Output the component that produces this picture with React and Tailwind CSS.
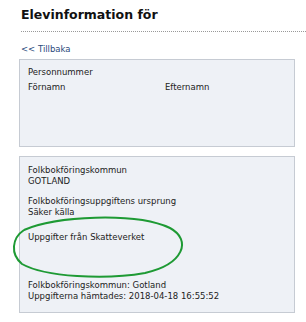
export default function App() {
  const f = { fontFamily: '"DejaVu Sans", Verdana, sans-serif' };
  return (
    <div className="relative w-[306px] h-[322px] bg-white text-[#222]" style={f}>
      <div className="pl-[21px] pt-[7px]">
        <h1 className="text-[12.5px] font-bold leading-[16px] text-[#111]">Elevinformation för</h1>
      </div>
      <div className="ml-[21px] mt-[8px] border-t border-dotted border-[#999]" />
      <div className="pl-[21px] pt-[12px] text-[8.5px] leading-[11px] text-[#2b4a7c]">&lt;&lt; Tillbaka</div>
      <div className="ml-[19px] mr-[11px] mt-[4px] h-[88px] border border-[#c6cbd3] bg-[#eef1f6] px-[8px] pt-[7px] text-[8.5px] leading-[11px]">
        <div>Personnummer</div>
        <div className="mt-[4px] grid grid-cols-[137px_1fr]">
          <div>Förnamn</div>
          <div>Efternamn</div>
        </div>
      </div>
      <div className="ml-[19px] mr-[11px] mt-[9px] h-[157px] border border-[#c6cbd3] bg-[#eef1f6] px-[8px] pt-[8px] text-[8.5px] leading-[11px]">
        <div>Folkbokföringskommun</div>
        <div>GOTLAND</div>
        <div className="mt-[9px]">Folkbokföringsuppgiftens ursprung</div>
        <div>Säker källa</div>
        <div className="mt-[14px]">Uppgifter från Skatteverket</div>
        <div className="mt-[37px]">Folkbokföringskommun: Gotland</div>
        <div>Uppgifterna hämtades: 2018-04-18 16:55:52</div>
      </div>
      <svg className="absolute left-0 top-0 pointer-events-none" width="306" height="322" viewBox="0 0 306 322">
        <path d="M24 230 C 55 216, 135 212, 170 228 C 192 240, 184 264, 145 273 C 105 280, 45 277, 22 264 C 10 254, 12 238, 24 230" fill="none" stroke="#1e9a34" strokeWidth="2" />
      </svg>
    </div>
  );
}
